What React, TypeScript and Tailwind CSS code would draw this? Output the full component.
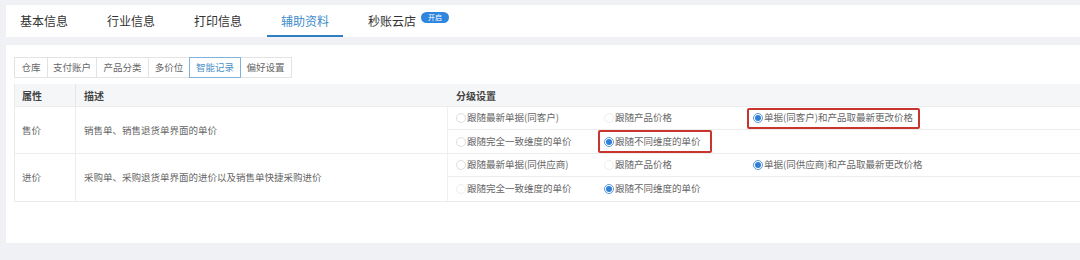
import React from "react";

const font = { fontFamily: '"Noto Sans CJK SC", "Noto Sans", sans-serif' };

function Radio({ checked, label, faint }: { checked?: boolean; label: string; faint?: boolean }) {
  return (
    <div className="flex items-center gap-[1px] whitespace-nowrap">
      {checked ? (
        <span className="w-[10px] h-[10px] rounded-full border border-[#5a9ad9] bg-white flex items-center justify-center">
          <span className="w-[6px] h-[6px] rounded-full bg-[#2f7fd6]" />
        </span>
      ) : (
        <span className={`w-[10px] h-[10px] rounded-full border ${faint ? "border-[#eeeeee]" : "border-[#dedede]"} bg-white`} />
      )}
      <span className="text-[9.5px] text-[#666] leading-none">{label}</span>
    </div>
  );
}

function Highlight({ children, w }: { children: React.ReactNode; w: string }) {
  return (
    <div className={`border-2 border-[#c8352f] rounded-[2px] ${w} h-full flex items-center pl-[4px] -ml-[6px]`}>{children}</div>
  );
}

export default function App() {
  const tabs = ["基本信息", "行业信息", "打印信息", "辅助资料", "秒账云店"];
  const sub = [
    { t: "仓库", w: "w-[34px]" },
    { t: "支付账户", w: "w-[50px]" },
    { t: "产品分类", w: "w-[53px]" },
    { t: "多价位", w: "w-[42px]" },
    { t: "智能记录", w: "w-[52px]" },
    { t: "偏好设置", w: "w-[52px]" },
  ];
  return (
    <div style={font} className="w-[1080px] h-[260px] bg-[#f0f1f5] overflow-hidden pl-[6px] pt-[5px]">
      {/* top tabs */}
      <div className="bg-white h-[32px] flex items-stretch gap-[11px]">
        {tabs.map((t, i) => (
          <div key={t} className="relative flex items-center px-[14px]">
            <span className={`text-[12px] ${i === 3 ? "text-[#3b8ccb]" : "text-[#333]"}`}>{t}</span>
            {i === 3 && <span className="absolute left-0 right-0 bottom-[0px] h-[2px] bg-[#2f7fc0]" />}
            {i === 4 && (
              <span className="absolute left-[67px] top-[7px] w-[28px] h-[11px] rounded-full bg-[#2e86de] text-white text-[7px] leading-[11px] text-center">
                开启
              </span>
            )}
          </div>
        ))}
      </div>

      {/* panel */}
      <div className="mt-[8px] bg-white h-[198px] pl-[8px] pt-[12px]">
        <div className="flex h-[21px]">
          {sub.map((s, i) => (
            <div
              key={s.t}
              className={`${s.w} flex items-center justify-center text-[9.5px] border ${
                i === 4 ? "border-[#7fb2dc] text-[#4a90c8]" : "border-[#e3e3e3] text-[#666]"
              } ${i > 0 && i !== 4 && i !== 5 ? "-ml-[1px]" : ""} ${i === 4 ? "-ml-[1px] relative z-10" : ""} ${i === 5 ? "-ml-[1px] border-l-0" : ""}`}
            >
              {s.t}
            </div>
          ))}
        </div>

        {/* table */}
        <div className="mt-[6px] border-l border-b border-[#ebebeb]">
          {/* header */}
          <div className="flex h-[23px] bg-[#f5f6f8] border-b border-[#ececec] text-[10px] font-bold text-[#444]">
            <div className="w-[61px] pl-[7px] flex items-center border-r border-[#e6e6e6]">属性</div>
            <div className="w-[372px] pl-[8px] flex items-center">描述</div>
            <div className="flex-1 pl-[8px] flex items-center">分级设置</div>
          </div>
          {/* row 1 */}
          <div className="flex h-[47px] border-b border-[#ececec] text-[9.5px] text-[#666]">
            <div className="w-[61px] pl-[7px] flex items-center border-r border-[#ececec]">售价</div>
            <div className="w-[372px] pl-[8px] flex items-center border-r border-[#f0f0f0]">销售单、销售退货单界面的单价</div>
            <div className="flex-1 flex flex-col">
              <div className="h-[23px] flex items-center pl-[8px] border-b border-[#ececec]">
                <div className="w-[148px]"><Radio label="跟随最新单据(同客户)" /></div>
                <div className="w-[149px]"><Radio label="跟随产品价格" faint /></div>
                <div className="h-[21px] py-0">
                  <Highlight w="w-[173px]"><Radio checked label="单据(同客户)和产品取最新更改价格" /></Highlight>
                </div>
              </div>
              <div className="flex-1 flex items-center pl-[8px]">
                <div className="w-[148px]"><Radio label="跟随完全一致维度的单价" /></div>
                <div className="h-[23px]">
                  <Highlight w="w-[114px]"><Radio checked label="跟随不同维度的单价" /></Highlight>
                </div>
              </div>
            </div>
          </div>
          {/* row 2 */}
          <div className="flex h-[47px] text-[9.5px] text-[#666]">
            <div className="w-[61px] pl-[7px] flex items-center border-r border-[#ececec]">进价</div>
            <div className="w-[372px] pl-[8px] flex items-center border-r border-[#f0f0f0]">采购单、采购退货单界面的进价以及销售单快捷采购进价</div>
            <div className="flex-1 flex flex-col">
              <div className="h-[23px] flex items-center pl-[8px] border-b border-[#ececec]">
                <div className="w-[148px]"><Radio label="跟随最新单据(同供应商)" /></div>
                <div className="w-[149px]"><Radio label="跟随产品价格" faint /></div>
                <div><Radio checked label="单据(同供应商)和产品取最新更改价格" /></div>
              </div>
              <div className="flex-1 flex items-center pl-[8px]">
                <div className="w-[148px]"><Radio label="跟随完全一致维度的单价" faint /></div>
                <div><Radio checked label="跟随不同维度的单价" /></div>
              </div>
            </div>
          </div>
        </div>
      </div>
    </div>
  );
}
